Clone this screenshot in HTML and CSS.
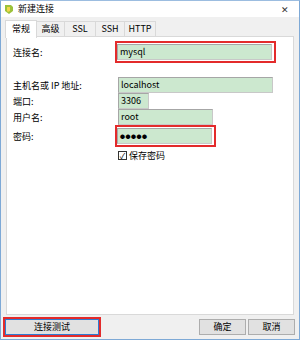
FILE: index.html
```html
<!DOCTYPE html>
<html lang="zh-CN">
<head>
  <meta charset="UTF-8">
  <title>新建连接</title>
  <link rel="stylesheet" href="styles.css">
</head>
<body>

<div class="window">
  <div class="titlebar">
    <svg class="app-icon" width="10" height="11" viewBox="0 0 10 11">
      <path d="M1 1 L7 1 L9 3 L9 7 L5 10 L1 7 Z" fill="#9cc23a"/>
      <path d="M3 3 L6 3 L6 7 L4 8 L3 7 Z" fill="#f2d64b"/>
    </svg>
    <span class="title">新建连接</span>
    <span class="close">✕</span>
  </div>

  <div class="tabs">
    <div class="tab active">常规</div>
    <div class="tab">高级</div>
    <div class="tab">SSL</div>
    <div class="tab">SSH</div>
    <div class="tab">HTTP</div>
  </div>

  <div class="panel">
    <div class="row first">
      <label>连接名:</label>
      <div class="mark"><div class="field wide">mysql</div></div>
    </div>

    <div class="row gap">
      <label>主机名或 IP 地址:</label>
      <div class="field wide">localhost</div>
    </div>
    <div class="row">
      <label>端口:</label>
      <div class="field port">3306</div>
    </div>
    <div class="row">
      <label>用户名:</label>
      <div class="field mid">root</div>
    </div>
    <div class="row">
      <label>密码:</label>
      <div class="mark"><div class="field mid dots">●●●●●</div></div>
    </div>
    <div class="row check-row">
      <label></label>
      <div class="check"><span class="box">✓</span>保存密码</div>
    </div>
  </div>

  <div class="footer">
    <div class="mark test"><button class="btn focused">连接测试</button></div>
    <div class="right">
      <button class="btn">确定</button>
      <button class="btn">取消</button>
    </div>
  </div>
</div>

</body>
</html>
```

FILE: styles.css
```css
body {
  margin: 0;
  font-family: "Noto Sans CJK SC", "Liberation Sans", sans-serif;
  font-size: 9px;
  color: #000;
}

.window {
  width: 300px;
  height: 340px;
  box-sizing: border-box;
  border: 1px solid #7ea9d6;
  border-top-color: #9cbde0;
  background-color: #f0f0f0;
  display: flex;
  flex-direction: column;
}

.titlebar {
  height: 16px;
  background-color: #fff;
  display: flex;
  align-items: center;
  padding: 0 0 0 3px;
}

.app-icon {
  margin-right: 4px;
}

.title {
  flex: 1;
  line-height: 16px;
}

.close {
  width: 28px;
  text-align: center;
  font-size: 9px;
  color: #333;
}

.tabs {
  display: flex;
  padding: 3px 0 0 4px;
  height: 17px;
  align-items: flex-end;
  position: relative;
  z-index: 1;
}

.tab {
  height: 15px;
  line-height: 14px;
  box-sizing: border-box;
  border: 1px solid #d9d9d9;
  border-bottom: none;
  border-left: none;
  padding: 0;
  text-align: center;
  white-space: nowrap;
  background-color: #f0f0f0;
  margin-bottom: 1px;
}

.tab:nth-child(2) { width: 28px; }
.tab:nth-child(3) { width: 31px; }
.tab:nth-child(4) { width: 29px; }
.tab:nth-child(5) { width: 31px; }

.tab.active {
  height: 18px;
  width: 32px;
  line-height: 16px;
  background-color: #fff;
  border-left: 1px solid #d9d9d9;
  margin-bottom: -1px;
}

.panel {
  flex: 1;
  margin: -1px 5px 0 5px;
  background-color: #fff;
  border: 1px solid #d9d9d9;
  padding: 4px 0 0 6px;
}

.row {
  display: flex;
  align-items: center;
}

.row label {
  width: 104px;
  flex: none;
}

.row.gap {
  margin-top: 14px;
}

.mark {
  border: 2px solid #e32b2b;
  padding: 1px 2px 1px 0;
  margin-left: -2px;
  display: flex;
}

.field {
  height: 16px;
  box-sizing: border-box;
  border: 1px solid #a6a6a6;
  border-right-color: #c8c8c8;
  border-bottom-color: #c8c8c8;
  background-color: #cce8cf;
  line-height: 14px;
  padding-left: 2px;
  margin-left: 1px;
}

.mark .field {
  margin-left: 0;
}

.field.wide { width: 155px; }
.field.port { width: 31px; }
.field.mid { width: 95px; }

.field.dots {
  font-size: 5px;
  letter-spacing: 0.5px;
  line-height: 14px;
}

.check-row {
  margin-top: 2px;
}

.check {
  display: flex;
  align-items: center;
  margin-left: 1px;
}

.box {
  width: 9px;
  height: 9px;
  box-sizing: border-box;
  border: 1px solid #333;
  font-size: 8px;
  line-height: 7px;
  text-align: center;
  margin-right: 2px;
}

.footer {
  height: 24px;
  display: flex;
  align-items: center;
  justify-content: space-between;
  padding: 0 4px 0 2px;
}

.right {
  display: flex;
  gap: 2px;
}

.btn {
  height: 16px;
  width: 47px;
  box-sizing: border-box;
  border: 1px solid #adadad;
  background-color: #e1e1e1;
  font-family: inherit;
  font-size: 9px;
  padding: 0;
  line-height: 14px;
  color: #000;
}

.mark.test {
  margin-left: 0;
  padding: 0;
}

.btn.focused {
  width: 94px;
  border: 1px solid #2f7bd1;
}
```
